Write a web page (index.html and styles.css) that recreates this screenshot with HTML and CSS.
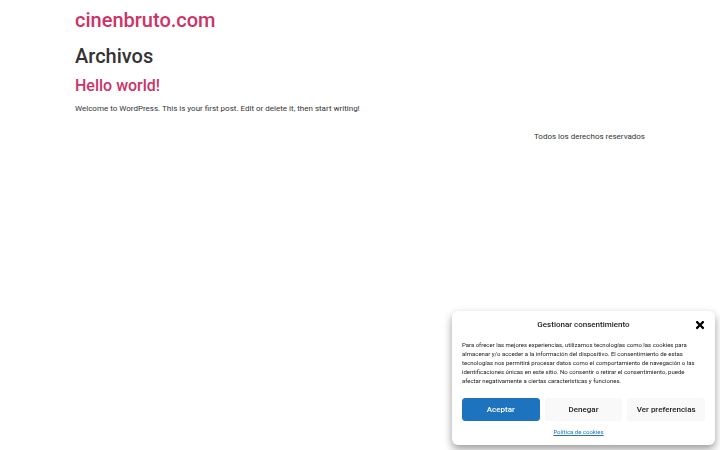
FILE: index.html
```html
<!DOCTYPE html>
<html lang="es">
<head>
    <meta charset="UTF-8">
    <meta name="viewport" content="width=device-width, initial-scale=1.0">
    <title>cinenbruto.com</title>
    <link rel="stylesheet" href="styles.css">
</head>
<body>
    <header class="site-header">
        <p class="site-title"><a href="#">cinenbruto.com</a></p>
    </header>
    <main class="site-main">
        <h1>Archivos</h1>
        <article class="post">
            <h2><a href="#">Hello world!</a></h2>
            <p>Welcome to WordPress. This is your first post. Edit or delete it, then start writing!</p>
        </article>
    </main>
    <footer class="site-footer">
        <p>Todos los derechos reservados</p>
    </footer>

    <div class="cookie-banner" role="dialog" aria-labelledby="cookieTitle">
        <div class="cookie-header">
            <div class="cookie-title" id="cookieTitle">Gestionar consentimiento</div>
            <button class="cookie-close" type="button" aria-label="Cerrar">
                <svg viewBox="0 0 352 512" width="10" height="12"><path fill="currentColor" d="M242.72 256l100.07-100.07c12.28-12.28 12.28-32.19 0-44.48l-22.24-22.24c-12.28-12.28-32.19-12.28-44.48 0L176 189.28 75.93 89.21c-12.28-12.28-32.19-12.28-44.48 0L9.21 111.45c-12.28 12.28-12.28 32.19 0 44.48L109.28 256 9.21 356.07c-12.28 12.28-12.28 32.19 0 44.48l22.24 22.24c12.28 12.28 32.2 12.28 44.48 0L176 322.72l100.07 100.07c12.28 12.28 32.2 12.28 44.48 0l22.24-22.24c12.28-12.28 12.28-32.19 0-44.48L242.72 256z"/></svg>
            </button>
        </div>
        <p class="cookie-message">Para ofrecer las mejores experiencias, utilizamos tecnologías como las cookies para almacenar y/o acceder a la información del dispositivo. El consentimiento de estas tecnologías nos permitirá procesar datos como el comportamiento de navegación o las identificaciones únicas en este sitio. No consentir o retirar el consentimiento, puede afectar negativamente a ciertas características y funciones.</p>
        <div class="cookie-buttons">
            <button class="btn btn-accept" type="button">Aceptar</button>
            <button class="btn" type="button">Denegar</button>
            <button class="btn" type="button">Ver preferencias</button>
        </div>
        <div class="cookie-links">
            <a href="#">Política de cookies</a>
        </div>
    </div>
</body>
</html>
```
FILE: styles.css
```css
* {
    box-sizing: border-box;
}
body {
    margin: 0;
    font-family: Roboto, sans-serif;
    font-size: 8px;
    line-height: 12px;
    color: #333;
    background-color: #fff;
}
a {
    color: #c36;
    text-decoration: none;
}
h1, h2, p {
    margin: 0;
}
h1, h2, .site-title {
    font-weight: 500;
}
.site-header, .site-main, .site-footer {
    width: 80%;
    max-width: 570px;
    margin: 0 auto;
}
.site-header {
    padding: 8px 0;
}
.site-title, h1 {
    font-size: 20px;
    line-height: 24px;
}
h1 {
    padding: 4px 0;
    margin: 0 0 4px;
}
h2 {
    font-size: 16px;
    line-height: 20px;
    margin-bottom: 7px;
}
.site-footer {
    padding: 16px 0;
    text-align: right;
}

/* Cookie consent */
.cookie-banner {
    position: fixed;
    right: 5px;
    bottom: 5px;
    width: 263px;
    padding: 7px 10px 8px;
    border-radius: 6px;
    background-color: #fff;
    color: #222;
    box-shadow: 0 4px 8px rgba(0, 0, 0, 0.4);
}
.cookie-header {
    display: grid;
    grid-template-columns: 20px 1fr 20px;
    align-items: center;
    line-height: 14px;
}
.cookie-title {
    grid-column: 2;
    text-align: center;
    font-weight: 500;
}
.cookie-close {
    justify-self: end;
    padding: 0;
    border: 0;
    background: none;
    color: #000;
    cursor: pointer;
}
.cookie-close svg {
    display: block;
}
.cookie-message {
    margin: 8px 0 13px;
    padding-right: 8px;
    font-size: 6px;
    line-height: 9px;
}
.cookie-buttons {
    display: flex;
    gap: 5px;
}
.btn {
    flex: 1;
    height: 23px;
    padding: 0;
    border: 1px solid #f8f8f8;
    border-radius: 3px;
    background-color: #f9f9f9;
    color: #222;
    font-family: inherit;
    font-size: 8px;
    font-weight: 500;
    cursor: pointer;
}
.btn-accept {
    border-color: #1e73be;
    background-color: #1e73be;
    color: #fff;
}
.cookie-links {
    margin-top: 6px;
    padding-right: 10px;
    text-align: center;
    font-size: 6px;
    line-height: 10px;
}
.cookie-links a {
    color: #1e73be;
    text-decoration: underline;
}
```
